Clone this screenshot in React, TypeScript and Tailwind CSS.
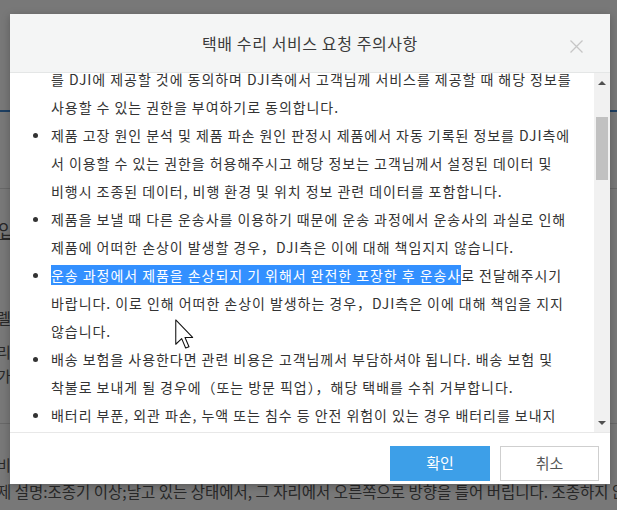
import React from "react";

const Bullet = () => (
  <div className="flex h-[28px] w-[41px] shrink-0 items-center pl-[23px]">
    <div className="h-[5px] w-[5px] rounded-full bg-[#333]" />
  </div>
);

const Line = ({ children }: { children: React.ReactNode }) => (
  <div className="h-[28px] whitespace-nowrap">{children}</div>
);

const Item = ({ lines }: { lines: React.ReactNode[] }) => (
  <div className="flex">
    <Bullet />
    <div className="flex flex-col">
      {lines.map((l, i) => (
        <Line key={i}>{l}</Line>
      ))}
    </div>
  </div>
);

export default function App() {
  return (
    <div className="relative h-[510px] w-[617px] overflow-hidden bg-white font-['Noto_Sans_CJK_KR','Noto_Sans',sans-serif]">
      {/* page behind the dialog */}
      <div className="flex flex-col text-[#555]">
        <div className="h-[110px]" />
        <div className="h-[2px] bg-[#3f86d0]" />
        <div className="h-[76px]" />
        <div className="h-px bg-[#dddddd]" />
        <div className="h-[31px]" />
        <div className="ml-[-2px] h-[20px] text-[18px] leading-[20px] underline">입</div>
        <div className="h-[69px]" />
        <div className="ml-[-3px] h-[18px] text-[15px] leading-[18px]">렐</div>
        <div className="h-[16px]" />
        <div className="ml-[-3px] h-[18px] text-[15px] leading-[18px]">리</div>
        <div className="h-[6px]" />
        <div className="ml-[-3px] h-[18px] text-[15px] leading-[18px]">가</div>
        <div className="h-[38px]" />
        <div className="h-px bg-[#dddddd]" />
        <div className="h-[32px]" />
        <div className="ml-[-3px] h-[18px] text-[15px] leading-[18px]">비</div>
        <div className="h-[7px]" />
        <div className="ml-[-3px] h-[20px] whitespace-nowrap text-[15.5px] leading-[20px]">
          제 설명:조종기 이상;날고 있는 상태에서, 그 자리에서 오른쪽으로 방향을 틀어 버립니다. 조종하지 않을 때
        </div>
      </div>

      {/* backdrop */}
      <div className="absolute inset-0 bg-black/[0.53]" />

      {/* dialog */}
      <div className="absolute left-[10px] top-[14px] flex h-[470px] w-[600px] flex-col bg-white shadow-[0_2px_8px_rgba(0,0,0,0.25)]">
        <div className="relative flex h-[59px] shrink-0 items-center justify-center border-b border-[#e4e6e6] bg-[#f4f5f5]">
          <span className="text-[16px] tracking-[0.6px] text-[#3a3a3a]">택배 수리 서비스 요청 주의사항</span>
          <svg
            className="absolute right-[27px] top-[26px]"
            width="13"
            height="13"
            viewBox="0 0 13 13"
            fill="none"
            stroke="#c6c6c6"
            strokeWidth="1.3"
          >
            <path d="M0.5 0.5 L12.5 12.5 M12.5 0.5 L0.5 12.5" />
          </svg>
        </div>

        <div className="flex h-[359px] shrink-0">
          <div className="flex-1 overflow-hidden">
            <div className="mt-[-8px] text-[14px] leading-[28px] tracking-[0.95px] text-[#333]">
              <div className="flex">
                <div className="w-[41px] shrink-0" />
                <div className="flex flex-col">
                  <Line>를 DJI에 제공할 것에 동의하며 DJI측에서 고객님께 서비스를 제공할 때 해당 정보를</Line>
                  <Line>사용할 수 있는 권한을 부여하기로 동의합니다.</Line>
                </div>
              </div>
              <Item
                lines={[
                  "제품 고장 원인 분석 및 제품 파손 원인 판정시 제품에서 자동 기록된 정보를 DJI측에",
                  "서 이용할 수 있는 권한을 허용해주시고 해당 정보는 고객님께서 설정된 데이터 및",
                  "비행시 조종된 데이터, 비행 환경 및 위치 정보 관련 데이터를 포함합니다.",
                ]}
              />
              <Item
                lines={[
                  "제품을 보낼 때 다른 운송사를 이용하기 때문에 운송 과정에서 운송사의 과실로 인해",
                  "제품에 어떠한 손상이 발생할 경우，DJI측은 이에 대해 책임지지 않습니다.",
                ]}
              />
              <Item
                lines={[
                  <>
                    <span className="bg-[#3390ff] text-white">
                      운송 과정에서 제품을 손상되지 기 위해서 완전한 포장한 후 운송사
                    </span>
                    로 전달해주시기
                  </>,
                  "바랍니다. 이로 인해 어떠한 손상이 발생하는 경우，DJI측은 이에 대해 책임을 지지",
                  "않습니다.",
                ]}
              />
              <Item
                lines={[
                  "배송 보험을 사용한다면 관련 비용은 고객님께서 부담하셔야 됩니다. 배송 보험 및",
                  "착불로 보내게 될 경우에（또는 방문 픽업），해당 택배를 수취 거부합니다.",
                ]}
              />
              <Item
                lines={[
                  "배터리 부푼, 외관 파손, 누액 또는 침수 등 안전 위험이 있는 경우 배터리를 보내지",
                  "마시기 바랍니다.",
                ]}
              />
            </div>
          </div>
          {/* scrollbar */}
          <div className="flex w-[16px] shrink-0 flex-col items-center bg-[#f1f1f1] pb-[7px] pt-[8px]">
            <div className="h-0 w-0 border-x-[4px] border-b-[4px] border-x-transparent border-b-[#505050]" />
            <div className="mt-[32px] h-[63px] w-[12px] bg-[#c1c1c1]" />
            <div className="flex-1" />
            <div className="h-0 w-0 border-x-[4px] border-t-[4px] border-x-transparent border-t-[#505050]" />
          </div>
        </div>

        <div className="flex flex-1 items-start justify-end gap-[10px] border-t border-[#e8e8e8] pr-[11px] pt-[13px]">
          <button className="flex h-[35px] w-[100px] items-center justify-center bg-[#3d9fe8] text-[15px] text-white">
            확인
          </button>
          <button className="flex h-[35px] w-[99px] items-center justify-center border border-[#cfcfcf] bg-white text-[15px] text-[#555]">
            취소
          </button>
        </div>
      </div>

      {/* mouse cursor */}
      <svg
        className="absolute left-[175px] top-[319px]"
        width="19"
        height="30"
        viewBox="0 0 12.5 19.5"
      >
        <path
          d="M0.5 0.5 L0.5 16.5 L4.4 12.8 L7 19 L9.2 18.1 L6.6 12 L11.6 12 Z"
          fill="white"
          stroke="#111"
          strokeWidth="0.7"
          strokeLinejoin="round"
        />
      </svg>
    </div>
  );
}
